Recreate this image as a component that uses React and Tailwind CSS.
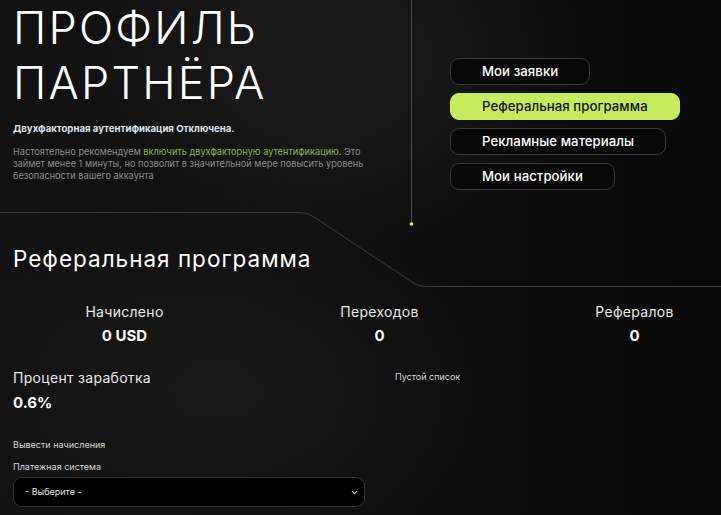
import { ChevronDown } from "lucide-react";

const NAV = [
  { label: "Мои заявки", active: false },
  { label: "Реферальная программа", active: true },
  { label: "Рекламные материалы", active: false },
  { label: "Мои настройки", active: false },
];

const STATS = [
  { label: "Начислено", value: "0 USD" },
  { label: "Переходов", value: "0" },
  { label: "Рефералов", value: "0" },
];

function ProfileNav() {
  return (
    <nav className="flex flex-col items-start gap-[8px] pt-[58px]">
      {NAV.map((item) => (
        <button
          key={item.label}
          className={
            item.active
              ? "h-[27px] rounded-[9px] border border-[#c6ec5b] bg-[#c6ec5b] px-[31px] text-[13.2px] font-medium text-[#111] tracking-[0.05px]"
              : "h-[27px] rounded-[9px] border border-[#3a3a3a] bg-[#080808] px-[31px] text-[13.2px] font-medium text-white tracking-[0.05px]"
          }
        >
          {item.label}
        </button>
      ))}
    </nav>
  );
}

// thin divider that steps down under the profile menu
function SectionEdge() {
  return (
    <svg className="pointer-events-none absolute left-0 top-0" width="721" height="300" viewBox="0 0 721 300">
      <path
        d="M0 212.5 H300 Q308 212.5 314 217 L412 282 Q418 286.5 428 286.5 H721"
        fill="none"
        stroke="#3b3b3b"
        strokeWidth="1"
      />
      <line x1="411.5" y1="0" x2="411.5" y2="222" stroke="#4a4e52" strokeWidth="1" />
      <circle cx="411.5" cy="224" r="1.8" fill="#d4f06a" />
    </svg>
  );
}

export default function App() {
  return (
    <div
      className="relative h-[515px] w-[721px] overflow-hidden bg-[#0b0b0b] bg-[radial-gradient(ellipse_260px_200px_at_330px_60px,#1d1d1d_0%,transparent_100%),radial-gradient(ellipse_300px_200px_at_220px_390px,#181818_0%,transparent_100%),linear-gradient(90deg,#121212_0%,#0d0d0d_60%,#090909_100%)] text-white"
      style={{ fontFamily: "Inter, 'Open Sans', sans-serif" }}
    >
      <SectionEdge />

      <div className="relative flex h-[212px]">
        <div className="w-[411px] pl-[13px]">
          <h1 className="text-[45px] font-light leading-[55px] tracking-[2.2px] text-white">
            ПРОФИЛЬ
            <br />
            ПАРТНЁРА
          </h1>
          <p className="mt-[12px] text-[9.6px] font-bold text-[#dfe2ea]">Двухфакторная аутентификация Отключена.</p>
          <p className="mt-[10px] text-[9.2px] leading-[12px] text-[#8c8c8c]">
            Настоятельно рекомендуем <span className="text-[#8fb64e]">включить двухфакторную аутентификацию.</span> Это
            <br />
            займет менее 1 минуты, но позволит в значительной мере повысить уровень
            <br />
            безопасности вашего аккаунта
          </p>
        </div>
        <div className="pl-[39px]">
          <ProfileNav />
        </div>
      </div>

      <section className="relative px-[13px]">
        <h2 className="mt-[32px] text-[22.5px] font-normal leading-[30px] tracking-[1px]">Реферальная программа</h2>

        <div className="-ml-[16px] mt-[28px] flex">
          {STATS.map((s) => (
            <div key={s.label} className="flex w-[255px] shrink-0 flex-col items-center">
              <span className="text-[14px] leading-[20px] tracking-[0.3px] text-[#e8e8e8]">{s.label}</span>
              <span className="mt-[4px] text-[15px] font-bold leading-[20px]">{s.value}</span>
            </div>
          ))}
        </div>

        <div className="mt-[22px] flex">
          <div className="w-[382px]">
            <p className="text-[14px] leading-[20px] tracking-[0.3px] text-[#e8e8e8]">Процент заработка</p>
            <p className="mt-[5px] text-[15px] font-bold leading-[20px]">0.6%</p>

            <p className="mt-[26px] text-[9px] leading-[12px] text-[#d8d8d8]">Вывести начисления</p>
            <p className="mt-[10px] text-[9px] leading-[12px] text-[#d8d8d8]">Платежная система</p>
            <div className="mt-[4px] flex h-[30px] w-[352px] items-center justify-between rounded-[9px] border border-[#303030] bg-black pl-[11px] pr-[5px]">
              <span className="text-[9px] text-[#e4e4e4]">- Выберите -</span>
              <ChevronDown size={9} strokeWidth={3} className="text-[#cfcfcf]" />
            </div>
          </div>
          <p className="pt-[3px] text-[9px] leading-[12px] text-[#d8d8d8]">Пустой список</p>
        </div>
      </section>
    </div>
  );
}
